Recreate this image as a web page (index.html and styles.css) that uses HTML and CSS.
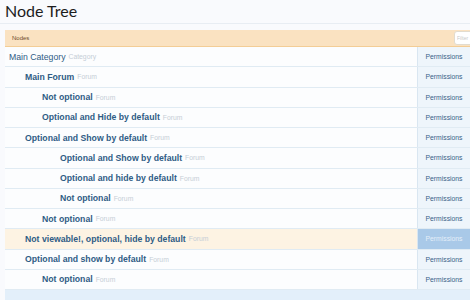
FILE: index.html
```html
<!DOCTYPE html>
<html lang="en">
<head>
    <meta charset="UTF-8">
    <title>Node Tree</title>
    <link rel="stylesheet" href="styles.css">
</head>
<body>
    <h1 class="title">Node Tree</h1>
    <div class="list">
        <div class="list-head">
            <span class="head-label">Nodes</span>
            <input class="filter" type="text" placeholder="Filter">
        </div>
        <ul class="nodes">
            <li class="node lvl0"><span class="node-name"><b class="normal">Main Category</b> <em>Category</em></span><a class="perm">Permissions</a></li>
            <li class="node lvl1"><span class="node-name"><b>Main Forum</b> <em>Forum</em></span><a class="perm">Permissions</a></li>
            <li class="node lvl2"><span class="node-name"><b>Not optional</b> <em>Forum</em></span><a class="perm">Permissions</a></li>
            <li class="node lvl2"><span class="node-name"><b>Optional and Hide by default</b> <em>Forum</em></span><a class="perm">Permissions</a></li>
            <li class="node lvl1"><span class="node-name"><b>Optional and Show by default</b> <em>Forum</em></span><a class="perm">Permissions</a></li>
            <li class="node lvl3"><span class="node-name"><b>Optional and Show by default</b> <em>Forum</em></span><a class="perm">Permissions</a></li>
            <li class="node lvl3"><span class="node-name"><b>Optional and hide by default</b> <em>Forum</em></span><a class="perm">Permissions</a></li>
            <li class="node lvl3"><span class="node-name"><b>Not optional</b> <em>Forum</em></span><a class="perm">Permissions</a></li>
            <li class="node lvl2"><span class="node-name"><b>Not optional</b> <em>Forum</em></span><a class="perm">Permissions</a></li>
            <li class="node lvl1 hot"><span class="node-name"><b>Not viewable!, optional, hide by default</b> <em>Forum</em></span><a class="perm">Permissions</a></li>
            <li class="node lvl1"><span class="node-name"><b>Optional and show by default</b> <em>Forum</em></span><a class="perm">Permissions</a></li>
            <li class="node lvl2"><span class="node-name"><b>Not optional</b> <em>Forum</em></span><a class="perm">Permissions</a></li>
        </ul>
        <div class="list-foot"></div>
    </div>
</body>
</html>
```

FILE: styles.css
```css
body {
    margin: 0;
    background: #f9fafd;
    font-family: "Liberation Sans", Arial, sans-serif;
    color: #222;
    overflow: hidden;
}
.title {
    margin: 0;
    padding: 1px 5px 0;
    height: 22px;
    font-family: Lato, "Liberation Sans", sans-serif;
    font-size: 16px;
    font-weight: normal;
    line-height: 20px;
    color: #1d1d1d;
    border-bottom: 1px solid #e8edf3;
}
.list {
    margin: 6px 0 0 5px;
}
.list-head {
    display: flex;
    align-items: center;
    justify-content: space-between;
    height: 16px;
    background: #fae2c1;
    border-bottom: 1px solid #f3cd96;
}
.head-label {
    padding-left: 7px;
    font-size: 6px;
    color: #6b4b2a;
}
.filter {
    width: 20px;
    height: 12px;
    margin-right: -10px;
    padding: 0 2px;
    border: 1px solid #e2dccf;
    border-radius: 3px;
    font-size: 5px;
    background: #fff;
}
.filter::placeholder {
    color: #c9c9c9;
}
.nodes {
    list-style: none;
    margin: 0;
    padding: 0;
}
.node {
    display: flex;
    height: 20.25px;
    background: #fcfdfe;
    border-bottom: 1px solid #e0ebf3;
    box-sizing: border-box;
}
.node-name {
    flex: 1;
    display: flex;
    align-items: center;
    gap: 3px;
    font-size: 8.7px;
}
.node-name b {
    color: #2f5c85;
}
.node-name b.normal {
    font-weight: normal;
}
.node-name em {
    font-style: normal;
    font-size: 6.8px;
    color: #c6ced6;
}
.lvl0 .node-name { padding-left: 4px; }
.lvl1 .node-name { padding-left: 20px; }
.lvl2 .node-name { padding-left: 37px; }
.lvl3 .node-name { padding-left: 55px; }
.perm {
    flex: 0 0 52px;
    display: flex;
    align-items: center;
    justify-content: center;
    background: #eef5fb;
    border-left: 1px solid #d9e6f1;
    font-size: 6.8px;
    color: #3a6288;
}
.hot {
    background: #fdf3e3;
}
.hot .perm {
    background: #a9c9e8;
    color: #e4eef8;
}
.list-foot {
    height: 14px;
    background: #e3effa;
}
```
